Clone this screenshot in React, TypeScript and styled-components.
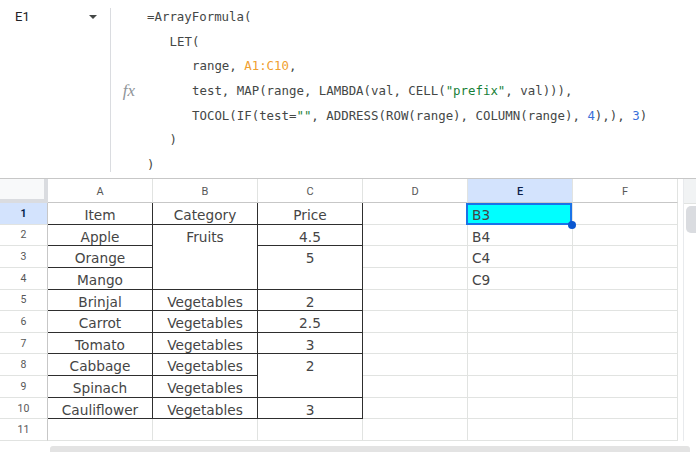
import React from 'react';
import styled, { createGlobalStyle } from 'styled-components';

const Global = createGlobalStyle`
  html, body { margin: 0; padding: 0; background: #fff; }
  body { width: 696px; height: 452px; overflow: hidden; font-family: Roboto, "Liberation Sans", sans-serif; }
`;

const Page = styled.div`
  width: 696px;
  height: 452px;
  display: flex;
  flex-direction: column;
  overflow: hidden;
`;

/* ---------- formula bar ---------- */
const FormulaBar = styled.div`
  flex: none;
  height: 178px;
  display: flex;
  border-bottom: 1px solid #c7c7c7;
`;

const NameBox = styled.div`
  width: 110px;
  flex: none;
  display: flex;
  align-items: flex-start;
  justify-content: space-between;
  box-sizing: border-box;
  padding: 9px 13px 0 15px;
  font: 13px/16px Roboto, "Liberation Sans", sans-serif;
  color: #202124;
`;

const Caret = styled.span`
  margin-top: 6px;
  width: 0;
  height: 0;
  border-left: 4px solid transparent;
  border-right: 4px solid transparent;
  border-top: 4px solid #444746;
`;

const Divider = styled.div`
  width: 1px;
  flex: none;
  background: #dadce0;
  margin: 8px 0 6px;
`;

const FxBox = styled.div`
  width: 36px;
  flex: none;
  display: flex;
  align-items: center;
  justify-content: center;
  padding-top: 3px;
  font: italic 17px "Liberation Serif", "DejaVu Serif", serif;
  color: #8f9499;
`;

const Code = styled.div`
  flex: 1;
  padding-top: 5px;
  font-family: "DejaVu Sans Mono", "Liberation Mono", monospace;
  font-size: 12.4px;
  line-height: 24.67px;
  color: #444746;
  white-space: pre;
`;

const CodeLine = styled.div<{ $indent: number }>`
  padding-left: ${p => p.$indent * 22.5}px;
`;

const Tok = styled.span<{ $kind: 'ref' | 'str' | 'num' }>`
  color: ${p => (p.$kind === 'ref' ? '#f0a030' : p.$kind === 'str' ? '#188038' : '#3a6fd8')};
`;

/* ---------- grid ---------- */
const Body = styled.div`
  display: flex;
  flex: none;
`;

const Grid = styled.div`
  display: grid;
  grid-template-columns: 48px repeat(6, 105px);
  grid-template-rows: 24px repeat(11, 21.65px);
  width: 678px;
`;

const Corner = styled.div`
  grid-column: 1;
  grid-row: 1;
  box-sizing: border-box;
  background: #f8f9fa;
  border-right: 4px solid #dadce0;
  border-bottom: 4px solid #dadce0;
`;

const ColHead = styled.div<{ $col: number; $sel?: boolean }>`
  grid-column: ${p => p.$col};
  grid-row: 1;
  box-sizing: border-box;
  display: flex;
  align-items: center;
  justify-content: center;
  border-right: 1px solid #e1e3e1;
  border-bottom: 1px solid #c7c7c7;
  background: ${p => (p.$sel ? '#d3e3fd' : '#fff')};
  color: ${p => (p.$sel ? '#0b1f4a' : '#575757')};
  font: ${p => (p.$sel ? 500 : 400)} 11px Roboto, sans-serif;
  padding-top: 1px;
`;

const RowHead = styled.div<{ $row: number; $sel?: boolean }>`
  grid-column: 1;
  grid-row: ${p => p.$row};
  box-sizing: border-box;
  display: flex;
  align-items: center;
  justify-content: center;
  border-right: 1px solid #c7c7c7;
  border-bottom: 1px solid #e1e3e1;
  background: ${p => (p.$sel ? '#d3e3fd' : '#fff')};
  color: ${p => (p.$sel ? '#041e49' : '#575757')};
  font: ${p => (p.$sel ? 700 : 400)} 10.5px Roboto, sans-serif;
`;

const Cell = styled.div<{ $col: number; $row: number; $span?: number; $table?: boolean; $left?: boolean; $sel?: boolean }>`
  grid-column: ${p => p.$col};
  grid-row: ${p => p.$row} / span ${p => p.$span ?? 1};
  position: relative;
  box-sizing: border-box;
  border-right: 1px solid ${p => (p.$table ? '#2e2e2e' : '#e1e3e1')};
  border-bottom: 1px solid ${p => (p.$table ? '#2e2e2e' : '#e1e3e1')};
  background: ${p => (p.$sel ? '#00ffff' : 'transparent')};
  padding: 2px 4px 0;
  font-family: "DejaVu Sans", Verdana, sans-serif;
  font-size: 13.7px;
  line-height: 20px;
  color: #454545;
  text-align: ${p => (p.$left ? 'left' : 'center')};
  white-space: nowrap;
  overflow: ${p => (p.$sel ? 'visible' : 'hidden')};
  z-index: ${p => (p.$sel ? 2 : 'auto')};
`;

const SelectionFrame = styled.span`
  position: absolute;
  left: -2px;
  top: 0;
  right: 0;
  bottom: -1px;
  border: 2px solid #1a73e8;
  pointer-events: none;
`;

const FillHandle = styled.span`
  position: absolute;
  right: -4px;
  bottom: -5px;
  width: 8px;
  height: 8px;
  border-radius: 50%;
  background: #0b57d0;
`;

const VScroll = styled.div`
  width: 18px;
  flex: none;
  display: flex;
  justify-content: flex-end;
`;

const VTrack = styled.div`
  width: 13px;
  box-sizing: border-box;
  border-left: 1px solid #e8eaed;
  display: flex;
  flex-direction: column;
`;

const VTrackHead = styled.div`
  height: 24px;
  background: #f1f3f4;
  border-bottom: 1px solid #e1e3e1;
`;

const VThumb = styled.div`
  margin: 2px 0 0 2px;
  width: 10px;
  height: 27px;
  border-radius: 5px 0 0 5px;
  background: #dadce0;
`;

const HScroll = styled.div`
  flex: 1;
  display: flex;
  padding: 5px 6px 0 50px;
`;

const HThumb = styled.div`
  flex: 1;
  background: #e3e3e3;
  border-radius: 3px 3px 0 0;
`;

type Entry = { row: number; span?: number; text: string };

const columns: Entry[][] = [
  [
    { row: 1, text: 'Item' }, { row: 2, text: 'Apple' }, { row: 3, text: 'Orange' }, { row: 4, text: 'Mango' },
    { row: 5, text: 'Brinjal' }, { row: 6, text: 'Carrot' }, { row: 7, text: 'Tomato' }, { row: 8, text: 'Cabbage' },
    { row: 9, text: 'Spinach' }, { row: 10, text: 'Cauliflower' },
  ],
  [
    { row: 1, text: 'Category' }, { row: 2, span: 3, text: 'Fruits' },
    ...[5, 6, 7, 8, 9, 10].map(r => ({ row: r, text: 'Vegetables' })),
  ],
  [
    { row: 1, text: 'Price' }, { row: 2, text: '4.5' }, { row: 3, span: 2, text: '5' }, { row: 5, text: '2' },
    { row: 6, text: '2.5' }, { row: 7, text: '3' }, { row: 8, span: 2, text: '2' }, { row: 10, text: '3' },
  ],
];

const results = ['B3', 'B4', 'C4', 'C9'];
const letters = ['A', 'B', 'C', 'D', 'E', 'F'];
const rows = Array.from({ length: 11 }, (_, i) => i + 1);

export default function App() {
  return (
    <Page>
      <Global />
      <FormulaBar>
        <NameBox>
          <span>E1</span>
          <Caret />
        </NameBox>
        <Divider />
        <FxBox>fx</FxBox>
        <Code>
          <CodeLine $indent={0}>=ArrayFormula(</CodeLine>
          <CodeLine $indent={1}>LET(</CodeLine>
          <CodeLine $indent={2}>range, <Tok $kind="ref">A1:C10</Tok>,</CodeLine>
          <CodeLine $indent={2}>
            test, MAP(range, LAMBDA(val, CELL(<Tok $kind="str">"prefix"</Tok>, val))),
          </CodeLine>
          <CodeLine $indent={2}>
            TOCOL(IF(test=<Tok $kind="str">""</Tok>, ADDRESS(ROW(range), COLUMN(range), <Tok $kind="num">4</Tok>),), <Tok $kind="num">3</Tok>)
          </CodeLine>
          <CodeLine $indent={1}>)</CodeLine>
          <CodeLine $indent={0}>)</CodeLine>
        </Code>
      </FormulaBar>
      <Body>
        <Grid>
          <Corner />
          {letters.map((l, i) => (
            <ColHead key={l} $col={i + 2} $sel={l === 'E'}>{l}</ColHead>
          ))}
          {rows.map(r => (
            <RowHead key={r} $row={r + 1} $sel={r === 1}>{r}</RowHead>
          ))}
          {columns.map((entries, ci) =>
            entries.map(e => (
              <Cell key={`${ci}-${e.row}`} $col={ci + 2} $row={e.row + 1} $span={e.span} $table>
                {e.text}
              </Cell>
            ))
          )}
          {[0, 1, 2].map(ci => (
            <Cell key={`blank-${ci}`} $col={ci + 2} $row={12} />
          ))}
          {rows.map(r => (
            <Cell key={`d-${r}`} $col={5} $row={r + 1} />
          ))}
          {rows.map(r =>
            r === 1 ? (
              <Cell key={`e-${r}`} $col={6} $row={2} $left $sel>
                {results[0]}
                <SelectionFrame />
                <FillHandle />
              </Cell>
            ) : (
              <Cell key={`e-${r}`} $col={6} $row={r + 1} $left>
                {results[r - 1] ?? ''}
              </Cell>
            )
          )}
          {rows.map(r => (
            <Cell key={`f-${r}`} $col={7} $row={r + 1} />
          ))}
        </Grid>
        <VScroll>
          <VTrack>
            <VTrackHead />
            <VThumb />
          </VTrack>
        </VScroll>
      </Body>
      <HScroll>
        <HThumb />
      </HScroll>
    </Page>
  );
}
